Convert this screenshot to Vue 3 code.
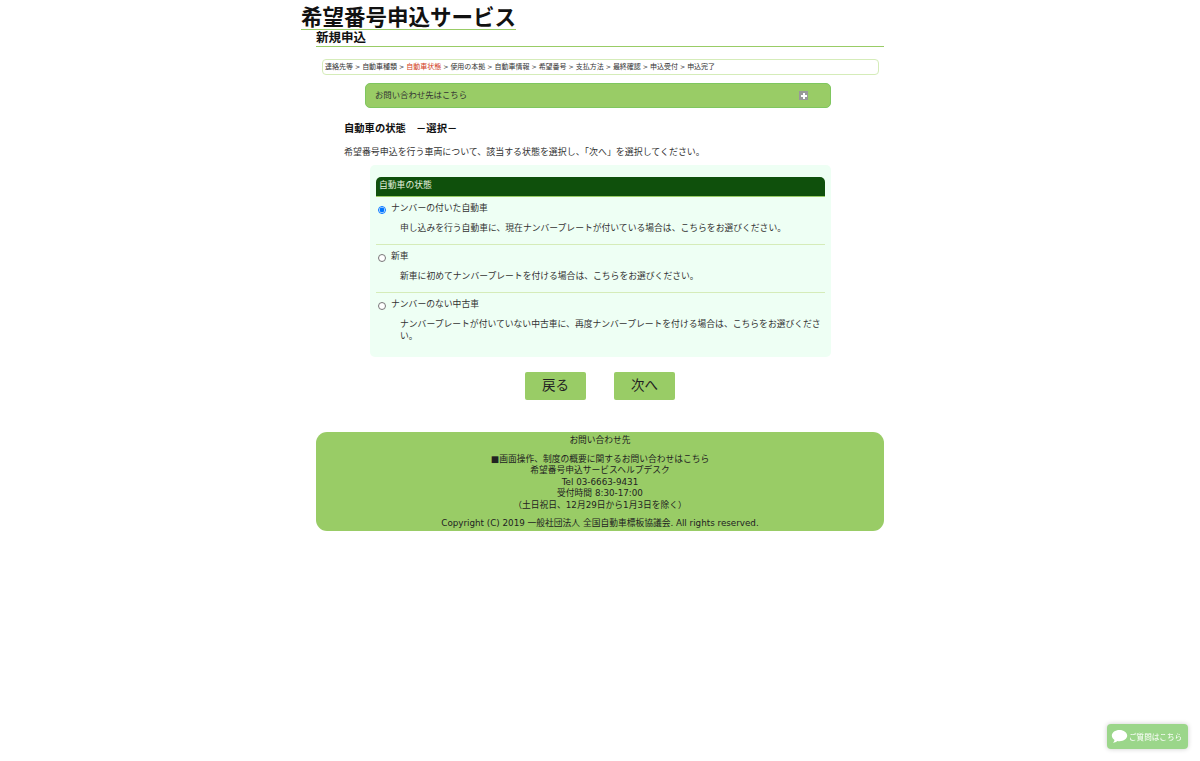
<script setup>
const crumbs = [
  { t: '連絡先等' }, { t: '自動車種類' }, { t: '自動車状態', on: true }, { t: '使用の本拠' },
  { t: '自動車情報' }, { t: '希望番号' }, { t: '支払方法' }, { t: '最終確認' }, { t: '申込受付' }, { t: '申込完了' }
]
const options = [
  { label: 'ナンバーの付いた自動車', desc: '申し込みを行う自動車に、現在ナンバープレートが付いている場合は、こちらをお選びください。', checked: true },
  { label: '新車', desc: '新車に初めてナンバープレートを付ける場合は、こちらをお選びください。' },
  { label: 'ナンバーのない中古車', desc: 'ナンバープレートが付いていない中古車に、再度ナンバープレートを付ける場合は、こちらをお選びください。' }
]
</script>

<template>
  <div class="page">
    <header class="head">
      <h1 class="title">希望番号申込サービス</h1>
      <h2 class="sub">新規申込</h2>
    </header>

    <nav class="crumbs">
      <template v-for="(c, i) in crumbs" :key="c.t">
        <span :class="{ on: c.on }">{{ c.t }}</span><span v-if="i < crumbs.length - 1" class="sep"> &gt; </span>
      </template>
    </nav>

    <div class="accordion">
      <span>お問い合わせ先はこちら</span>
      <span class="plus"></span>
    </div>

    <h3 class="heading">自動車の状態　－選択－</h3>
    <p class="lead">希望番号申込を行う車両について、該当する状態を選択し、「次へ」を選択してください。</p>

    <section class="panel">
      <div class="panel-title">自動車の状態</div>
      <div v-for="o in options" :key="o.label" class="option">
        <label class="opt-label">
          <input type="radio" name="state" :checked="o.checked" />
          <span>{{ o.label }}</span>
        </label>
        <p class="opt-desc">{{ o.desc }}</p>
      </div>
    </section>

    <div class="actions">
      <button class="btn" type="button">戻る</button>
      <button class="btn" type="button">次へ</button>
    </div>

    <footer class="foot">
      <p class="foot-top">お問い合わせ先</p>
      <p class="foot-body">■画面操作、制度の概要に関するお問い合わせはこちら<br />希望番号申込サービスヘルプデスク<br />Tel 03-6663-9431<br />受付時間 8:30-17:00<br />（土日祝日、12月29日から1月3日を除く）</p>
      <p class="foot-copy">Copyright (C) 2019 一般社団法人 全国自動車標板協議会. All rights reserved.</p>
    </footer>

    <div class="chat">
      <svg class="chat-icon" viewBox="0 0 18 16" width="17" height="15">
        <path d="M9 1C4.400 1 .8 3.600.8 7c0 1.900 1.100 3.500 2.900 4.600-.2 1.100-.8 2.200-1.700 3.100 1.900-.2 3.500-.9 4.700-1.900.7.100 1.500.2 2.300.2 4.600 0 8.200-2.700 8.200-6S13.600 1 9 1z" fill="#fff" />
      </svg>
      <span>ご質問はこちら</span>
    </div>
  </div>
</template>

<style scoped>
.page {
  width: 600px;
  margin: 0 auto;
  min-height: 761px;
  box-sizing: border-box;
  font-family: "DejaVu Sans", "Noto Sans CJK JP", sans-serif;
  font-size: 10px;
  color: #222;
}
.head { padding-top: 3px; }
.title {
  display: block;
  width: 215px;
  margin: 0 0 0 1px;
  padding-bottom: 1px;
  font-family: "Noto Sans CJK JP", sans-serif;
  font-size: 21.5px;
  line-height: 25px;
  font-weight: 700;
  white-space: nowrap;
  color: #111;
  border-bottom: 1px solid #99cc66;
}
.sub {
  margin: 0 0 0 16px;
  width: 568px;
  height: 16px;
  font-family: "Noto Sans CJK JP", sans-serif;
  font-size: 12.500px;
  line-height: 14px;
  font-weight: 700;
  color: #111;
  border-bottom: 1.5px solid #99cc66;
}
.crumbs {
  box-sizing: border-box;
  width: 557px;
  height: 16px;
  margin: 12px 0 0 22px;
  padding-left: 2px;
  border: 1px solid #d5ecb9;
  border-radius: 4px;
  font-size: 7px;
  line-height: 13px;
  white-space: nowrap;
  color: #333;
}
.crumbs .sep { font-size: 6.200px; }
.crumbs .on { color: #d2401c; }
.accordion {
  box-sizing: border-box;
  width: 466px;
  height: 25px;
  margin: 8px 0 0 65px;
  padding: 0 22px 3px 9px;
  display: flex;
  align-items: center;
  justify-content: space-between;
  background: #99cc66;
  border: 1px solid #7fc65f;
  border-radius: 5px;
  font-size: 8.400px;
  color: #333;
}
.plus {
  position: relative;
  top: 1.500px;
  width: 9px;
  height: 9px;
  background: #999;
}
.plus::before, .plus::after {
  content: "";
  position: absolute;
  background: #fff;
}
.plus::before { left: 1.500px; right: 1.500px; top: 3.500px; height: 2px; }
.plus::after { top: 1.500px; bottom: 1.500px; left: 3.500px; width: 2px; }
.heading {
  margin: 13px 0 0 44px;
  font-size: 10.300px;
  line-height: 14px;
  font-weight: 700;
  color: #111;
}
.lead {
  margin: 10px 0 0 44px;
  font-size: 8.950px;
  line-height: 14px;
  color: #333;
}
.panel {
  box-sizing: border-box;
  width: 461px;
  height: 192px;
  margin: 6px 0 0 70px;
  padding: 12px 6px 0;
  background: #eefff4;
  border-radius: 5px;
}
.panel-title {
  height: 20px;
  box-sizing: border-box;
  padding-left: 3px;
  background: #0f500c;
  border-bottom: 1.5px solid #99cc66;
  border-radius: 5px 5px 0 0;
  font-size: 8.800px;
  line-height: 17px;
  color: #e4f1dd;
}
.option {
  padding-top: 3px;
  height: 48px;
  box-sizing: border-box;
  border-bottom: 1px solid #d5ecb9;
}
.option:last-child { border-bottom: 0; height: auto; }
.opt-label {
  display: flex;
  align-items: center;
  gap: 5px;
  height: 14px;
  font-size: 8.800px;
  color: #333;
}
.opt-label input {
  width: 8px;
  height: 8px;
  margin: 5px 0 0 2px;
  flex: none;
}
.opt-desc {
  margin: 6px 0 0 24px;
  font-size: 8.800px;
  line-height: 12px;
  color: #333;
  padding-top: 2px;
}
.actions {
  display: flex;
  justify-content: center;
  gap: 28px;
  margin-top: 15px;
  margin-right: 1px;
}
.btn {
  width: 61px;
  height: 28px;
  padding: 0 0 5px 1px;
  border: 0;
  border-radius: 2px;
  background: #99cc66;
  font-family: "Noto Sans CJK JP", sans-serif;
  font-size: 13.500px;
  color: #222;
}
.foot {
  box-sizing: border-box;
  width: 568px;
  height: 99px;
  margin: 32px 0 0 16px;
  padding-top: 3px;
  background: #99cc66;
  border-radius: 11px;
  text-align: center;
  font-size: 8.750px;
  line-height: 11.600px;
  color: #222;
}
.foot p { margin: 0; }
.foot-body { margin-top: 7px !important; }
.foot-copy { margin-top: 6px !important; }
.chat {
  position: fixed;
  left: 1107px;
  top: 724px;
  width: 81px;
  height: 25px;
  display: flex;
  align-items: center;
  gap: 1px;
  padding-left: 4px;
  box-sizing: border-box;
  background: #9bd68a;
  border-radius: 4px;
  box-shadow: 0 0 5px rgba(0, 0, 0, 0.2);
  color: #fff;
  font-size: 7.600px;
  white-space: nowrap;
}
.chat-icon { flex: none; }
</style>

<style>
html, body { background: #fff; }
</style>
